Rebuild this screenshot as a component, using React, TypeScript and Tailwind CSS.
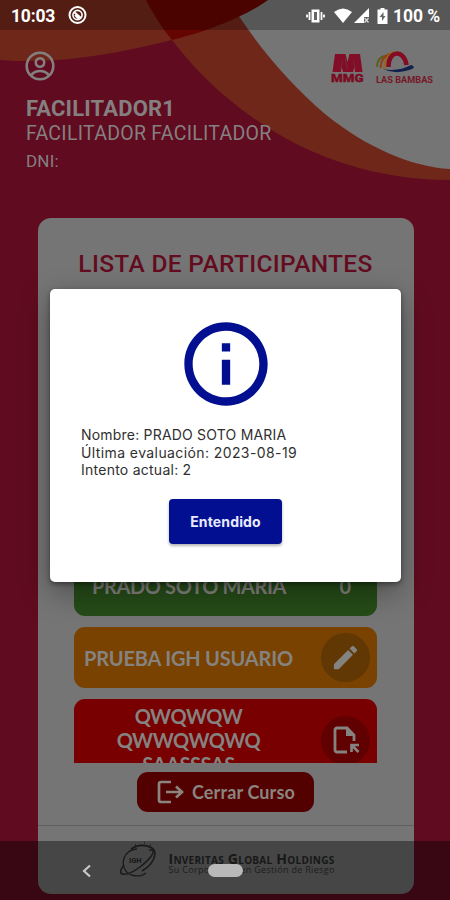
import React from 'react';
import { MdOutlineInfo, MdEdit } from 'react-icons/md';

interface ParticipantRowProps {
  name: React.ReactNode;
  className: string;
  children: React.ReactNode;
}

const Backdrop: React.FC = () => (
  <svg className="absolute inset-0" width="450" height="220" viewBox="0 0 450 220">
    <path d="M0 0H268C258 6 249 12 240 16C218 27 195 34 172 40C125 52 75 61 30 61C20 61 10 61 0 60Z" fill="#6f271a" />
    <path d="M146 0C154 15 162 28 172 40C189 62 206 80 225 96C289 151 366 180 450 180V0Z" fill="#6f271a" />
    <path d="M229 0C253 41 287 81 325 114C367 148 412 167 450 169V0Z" fill="#757575" />
    <path d="M146 0C154 15 162 28 172 40C195 34 218 27 240 16C249 12 258 7 268 0Z" fill="#640501" />
  </svg>
);

const StatusBar: React.FC = () => (
  <div className="absolute inset-x-0 top-0 h-[30px] bg-black/25 flex items-center justify-between pl-[11px] pr-[10px] pt-[2px] text-white font-bold text-[17.5px]">
    <div className="flex items-center gap-[13px]">
      <span className="tracking-[-0.2px]">10:03</span>
      <svg width="20" height="20" viewBox="0 0 20 20" fill="none" stroke="white">
        <circle cx="9.500" cy="9" r="8" strokeWidth="2" />
        <circle cx="9.500" cy="9" r="4.600" strokeWidth="1.600" />
        <path d="M6 6l7 6M7 9l4 4" strokeWidth="2" />
      </svg>
    </div>
    <div className="flex items-center">
      <svg width="82" height="20" viewBox="0 0 82 20" fill="white">
        <path d="M5.500 3.500h8v13h-8z" />
        <path d="M8 6h3v8H8z" fill="#666" />
        <path d="M3.500 6v8M15.500 6v8M1 8.500v3M18 8.500v3" stroke="white" strokeWidth="1.800" />
        <path d="M28 6Q37 -1 46 6L37 17Z" />
        <path d="M63 2V17H48Z" />
        <path d="M58 11h5v6h-5z" fill="#5a5a5a" />
        <path d="M58.500 12l4 4.500M62.500 12l-4 4.500" stroke="#ddd" strokeWidth="1.200" />
        <path d="M71.500 3.500h3V2h4v1.500h3V18h-10z" />
        <path d="M77.500 6l-4 5h2.500v4l3.500-5h-2z" fill="#666" />
      </svg>
      <span className="ml-[5px] tracking-[-0.1px]">100 %</span>
    </div>
  </div>
);

const BrandLogos: React.FC = () => (
  <svg width="104" height="36" viewBox="0 0 104 36">
    <path d="M4 4h10.500l2 8 2-8H29l2.500 18H24l-.5-5-1.500 5h-10l-1.500-5-.5 5H1.500z" fill="#820d27" />
    <path d="M11.500 11l-1.500 8M14 8l2.500 11M22.500 11l1.500 8" stroke="#6e3540" strokeWidth=".8" />
    <text x="0" y="32" fontSize="10" fontWeight="900" textLength="32.500" lengthAdjust="spacingAndGlyphs" fill="#790c24" stroke="#790c24" strokeWidth=".3">MMG</text>
    <path d="M46 17C46 10 50 6 55 6" fill="none" stroke="#586017" strokeWidth="1.800" />
    <path d="M49.500 18C50 10 54 5 60 4" fill="none" stroke="#954017" strokeWidth="2" />
    <path d="M53 19C54 9 57 3 64 2" fill="none" stroke="#996611" strokeWidth="1.800" />
    <path d="M57.500 17C57 0 73 -1 75.500 15" fill="none" stroke="#850b25" strokeWidth="4.500" />
    <path d="M52 19Q67 22 80 15Q88 18 74 21Q63 24 52 19Z" fill="#11204d" />
    <text x="45" y="32.500" fontSize="9" fontWeight="700" textLength="57" lengthAdjust="spacingAndGlyphs" fill="#76182a">LAS BAMBAS</text>
  </svg>
);

const Header: React.FC = () => (
  <header className="flex h-[218px] justify-between pt-[50px] pl-[25px] pr-[15px] text-[#858080]">
    <div className="flex flex-col">
      <svg width="31" height="32" viewBox="0 0 31 32" fill="none" stroke="currentColor" strokeWidth="2.600">
        <circle cx="15" cy="16" r="13.300" />
        <circle cx="15" cy="12.500" r="4.200" />
        <path d="M6 25.500C8 22.500 11 21 15 21C19 21 22 22.500 24 25.500" />
      </svg>
      <div className="mt-[14px] pl-px text-[22px] leading-[26px] font-bold tracking-[0.17px] whitespace-nowrap">FACILITADOR1</div>
      <div className="pl-px text-[19.5px] leading-[23px] tracking-[0.28px] whitespace-nowrap">FACILITADOR FACILITADOR</div>
      <div className="mt-[6px] pl-px text-[17px] leading-5 tracking-[0.2px]">DNI:</div>
    </div>
    <BrandLogos />
  </header>
);

const ParticipantRow: React.FC<ParticipantRowProps> = ({ name, className, children }) => (
  <div className={`flex shrink-0 items-center rounded-[11px] text-[#858380] font-bold text-[20px] leading-6 ${className}`}>
    <div className="flex-1 text-center whitespace-nowrap">{name}</div>
    {children}
  </div>
);

const ParticipantsCard: React.FC = () => (
  <main className="ml-[37.5px] flex h-[676px] w-[376px] flex-col items-center rounded-[13px] bg-[#757575]">
    <h1 className="mt-[31px] text-[24.500px] leading-[30px] font-medium tracking-[0.32px] whitespace-nowrap text-[#640c1f]">LISTA DE PARTICIPANTES</h1>
    <div className="flex h-[484px] w-[303px] flex-col gap-[11px] overflow-hidden pt-[275px] font-['Lato',sans-serif]">
      <ParticipantRow name="PRADO SOTO MARIA" className="h-[62px] pt-[2px] pr-[24px] bg-[#264c18] tracking-[-0.38px]">
        <span className="ml-[33px] w-[16px] text-center">0</span>
      </ParticipantRow>
      <ParticipantRow name="PRUEBA IGH USUARIO" className="h-[61px] pr-[7px] bg-[#794200] tracking-[-0.2px]">
        <span className="ml-[18px] flex size-[49px] items-center justify-center rounded-full bg-[#613704]">
          <MdEdit size={31} />
        </span>
      </ParticipantRow>
      <ParticipantRow
        name={<>QWQWQW<br />QWWQWQWQ<br />SAASSSAS</>}
        className="h-[82px] pr-[7px] bg-[#790000] tracking-[-0.4px]"
      >
        <span className="ml-[18px] flex size-[49px] items-center justify-center rounded-full bg-[#600000]">
          <svg width="28" height="30" viewBox="0 0 28 30" fill="none" stroke="currentColor" strokeWidth="2.800">
            <path d="M15 27H5a2 2 0 0 1-2-2V5a2 2 0 0 1 2-2h10l7 7v6" />
            <path d="M14 3v8h8z" fill="currentColor" stroke="none" />
            <path d="M26.500 27l-6-6M19.500 27v-7h7.500" strokeWidth="2.700" />
          </svg>
        </span>
      </ParticipantRow>
    </div>
    <button className="mt-[9px] flex h-10 w-[177px] shrink-0 items-center rounded-[11px] bg-[#530000] pl-[20px] text-[#8b8580] font-['Lato',sans-serif]">
      <svg width="27" height="26" viewBox="0 0 27 26" fill="none" stroke="currentColor" strokeWidth="2.700">
        <path d="M14 3H4a2 2 0 0 0-2 2v16a2 2 0 0 0 2 2h10M9 13h16M19 7.500l6 5.500-6 5.500" />
      </svg>
      <span className="ml-2 whitespace-nowrap text-[18px] font-bold tracking-[0.13px]">Cerrar Curso</span>
    </button>
    <div className="mt-[13px] w-full border-t border-[#5e5e5e]" />
    <div className="mt-[16px] flex w-full items-start pl-[79px]">
      <svg width="42" height="38" viewBox="0 0 42 38" fill="none" stroke="#2c2c2c">
        <path d="M20 7C7 8 3 21 9 29C12 34 23 36 29 31" strokeWidth="1.300" />
        <path d="M14 7C24 0 38 4 38 12C37 20 32 25 25 29" strokeWidth="1.700" />
        <path d="M7 23C-3 36 11 34 23 25C32 18 42 7 32 8" strokeWidth="1.500" />
        <path d="M18 3h1M27 1h1M33 3h1" strokeWidth="1.300" />
        <text x="12" y="21" fontSize="7.500" fontWeight="700" fill="#292929" stroke="none">IGH</text>
      </svg>
      <div className="ml-[10px] mt-[9px] text-[#292929] whitespace-nowrap">
        <div className="text-[14px] leading-[15px] font-bold [font-variant-caps:small-caps] tracking-[0.27px] font-['Open_Sans',sans-serif]">Inveritas Global Holdings</div>
        <div className="text-[9px] leading-[8px] tracking-[0.32px] text-[#323232] font-['Open_Sans',sans-serif]">Su Corporación en Gestión de Riesgo</div>
      </div>
    </div>
  </main>
);

const InfoDialog: React.FC = () => (
  <div role="dialog" className="absolute left-[50px] top-[289px] flex h-[293px] w-[351px] flex-col items-center rounded-[5px] bg-white shadow-[0_10px_30px_rgba(0,0,0,0.35),0_2px_5px_rgba(0,0,0,0.4)] font-['Inter',sans-serif]">
    <MdOutlineInfo className="mt-[25px] size-[100px] shrink-0 text-[#020f91]" />
    <div className="mt-[12px] w-full pl-[31px] text-[14px] leading-[17.5px] text-[#303030] whitespace-nowrap">
      <p className="tracking-[0.2px]">Nombre: PRADO SOTO MARIA</p>
      <p className="tracking-[0.4px]">Última evaluación: 2023-08-19</p>
      <p className="tracking-[0.25px]">Intento actual: 2</p>
    </div>
    <button className="mt-[20px] h-[45px] w-[113px] shrink-0 rounded-[4px] bg-[#020f91] text-[14px] font-bold tracking-[0.15px] text-[#e9eaff] shadow-[0_2px_3px_rgba(0,0,0,0.3)]">Entendido</button>
  </div>
);

const NavigationBar: React.FC = () => (
  <div className="absolute inset-x-0 bottom-0 flex h-[59px] items-center bg-black/40 pl-[82px]">
    <svg width="10" height="14" viewBox="0 0 10 14" fill="none" stroke="#c8c8c8" strokeWidth="2.200">
      <path d="M8 1.500L2 7l6 5.500" />
    </svg>
    <div className="ml-[116px] h-[13px] w-[35px] rounded-full bg-[#b9b9b9]" />
  </div>
);

const App: React.FC = () => {
  return (
    <div className="relative h-[900px] w-[450px] overflow-hidden bg-[#600b20] font-['Roboto',sans-serif]">
      <Backdrop />
      <div className="relative">
        <Header />
        <ParticipantsCard />
      </div>
      <StatusBar />
      <InfoDialog />
      <NavigationBar />
    </div>
  );
};

export default App;
